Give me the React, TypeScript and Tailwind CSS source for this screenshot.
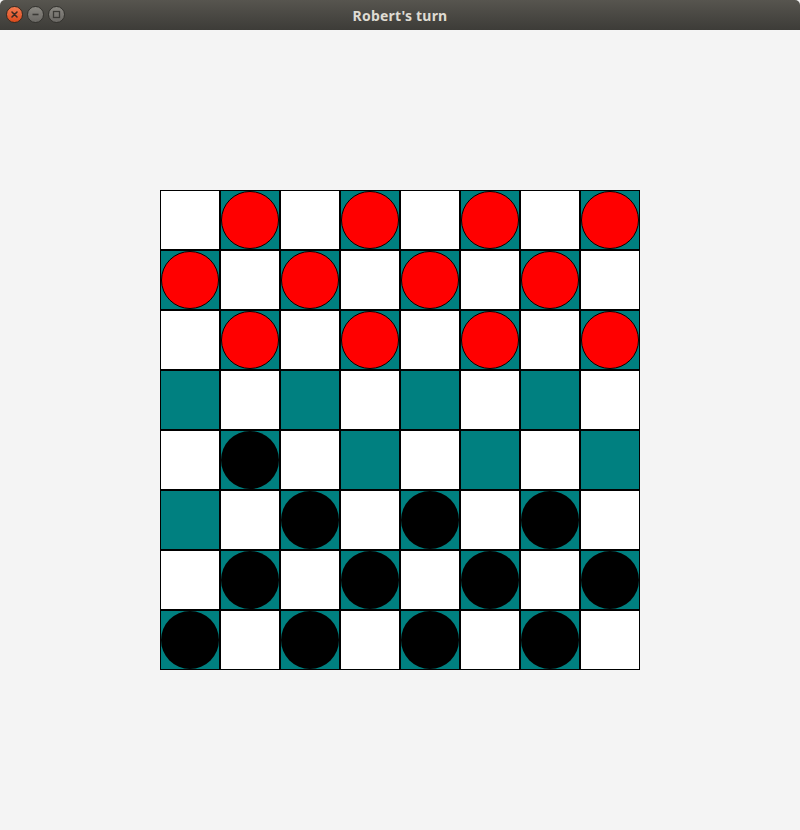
import React from "react";

const rows = [
  "-r-r-r-r",
  "r-r-r-r-",
  "-r-r-r-r",
  "--------",
  "-b------",
  "--b-b-b-",
  "-b-b-b-b",
  "b-b-b-b-",
];

export default function App() {
  return (
    <div className="w-[800px] h-[830px] flex flex-col bg-[#f4f4f4] overflow-hidden">
      <div className="h-[30px] shrink-0 relative flex items-center justify-center bg-gradient-to-b from-[#57554f] to-[#3d3c38] rounded-t-[5px]">
        <div className="absolute left-[6px] top-[6px] flex gap-[4px]">
          <div className="w-[17px] h-[17px] rounded-full bg-gradient-to-b from-[#f37a4f] to-[#dc4a1a] border border-[#3a2a20] flex items-center justify-center">
            <svg width="9" height="9" viewBox="0 0 9 9">
              <path d="M2 2 L7 7 M7 2 L2 7" stroke="#3b2a22" strokeWidth="1.6" strokeLinecap="round" />
            </svg>
          </div>
          <div className="w-[17px] h-[17px] rounded-full bg-gradient-to-b from-[#8a8882] to-[#6a6864] border border-[#33322e] flex items-center justify-center">
            <svg width="9" height="9" viewBox="0 0 9 9">
              <path d="M1.5 4.5 L7.5 4.5" stroke="#3b3a36" strokeWidth="1.6" />
            </svg>
          </div>
          <div className="w-[17px] h-[17px] rounded-full bg-gradient-to-b from-[#8a8882] to-[#6a6864] border border-[#33322e] flex items-center justify-center">
            <svg width="9" height="9" viewBox="0 0 9 9">
              <rect x="1.5" y="1.5" width="6" height="6" fill="none" stroke="#3b3a36" strokeWidth="1.3" />
            </svg>
          </div>
        </div>
        <span className="text-[14px] font-bold text-[#dfdbd2] font-['Noto_Sans',sans-serif] tracking-[0.2px]">
          Robert's turn
        </span>
      </div>
      <div className="flex-1 flex items-center justify-center">
        <div className="grid grid-cols-8 w-[480px]">
          {rows.flatMap((row, r) =>
            row.split("").map((ch, c) => {
              const dark = (r + c) % 2 === 1;
              return (
                <div
                  key={`${r}-${c}`}
                  className={`w-[60px] h-[60px] border border-black flex items-center justify-center ${
                    dark ? "bg-[#008080]" : "bg-white"
                  }`}
                >
                  {ch === "r" && (
                    <div className="w-[58px] h-[58px] shrink-0 rounded-full bg-[#ff0000] border border-black" />
                  )}
                  {ch === "b" && (
                    <div className="w-[58px] h-[58px] shrink-0 rounded-full bg-black" />
                  )}
                </div>
              );
            })
          )}
        </div>
      </div>
    </div>
  );
}
